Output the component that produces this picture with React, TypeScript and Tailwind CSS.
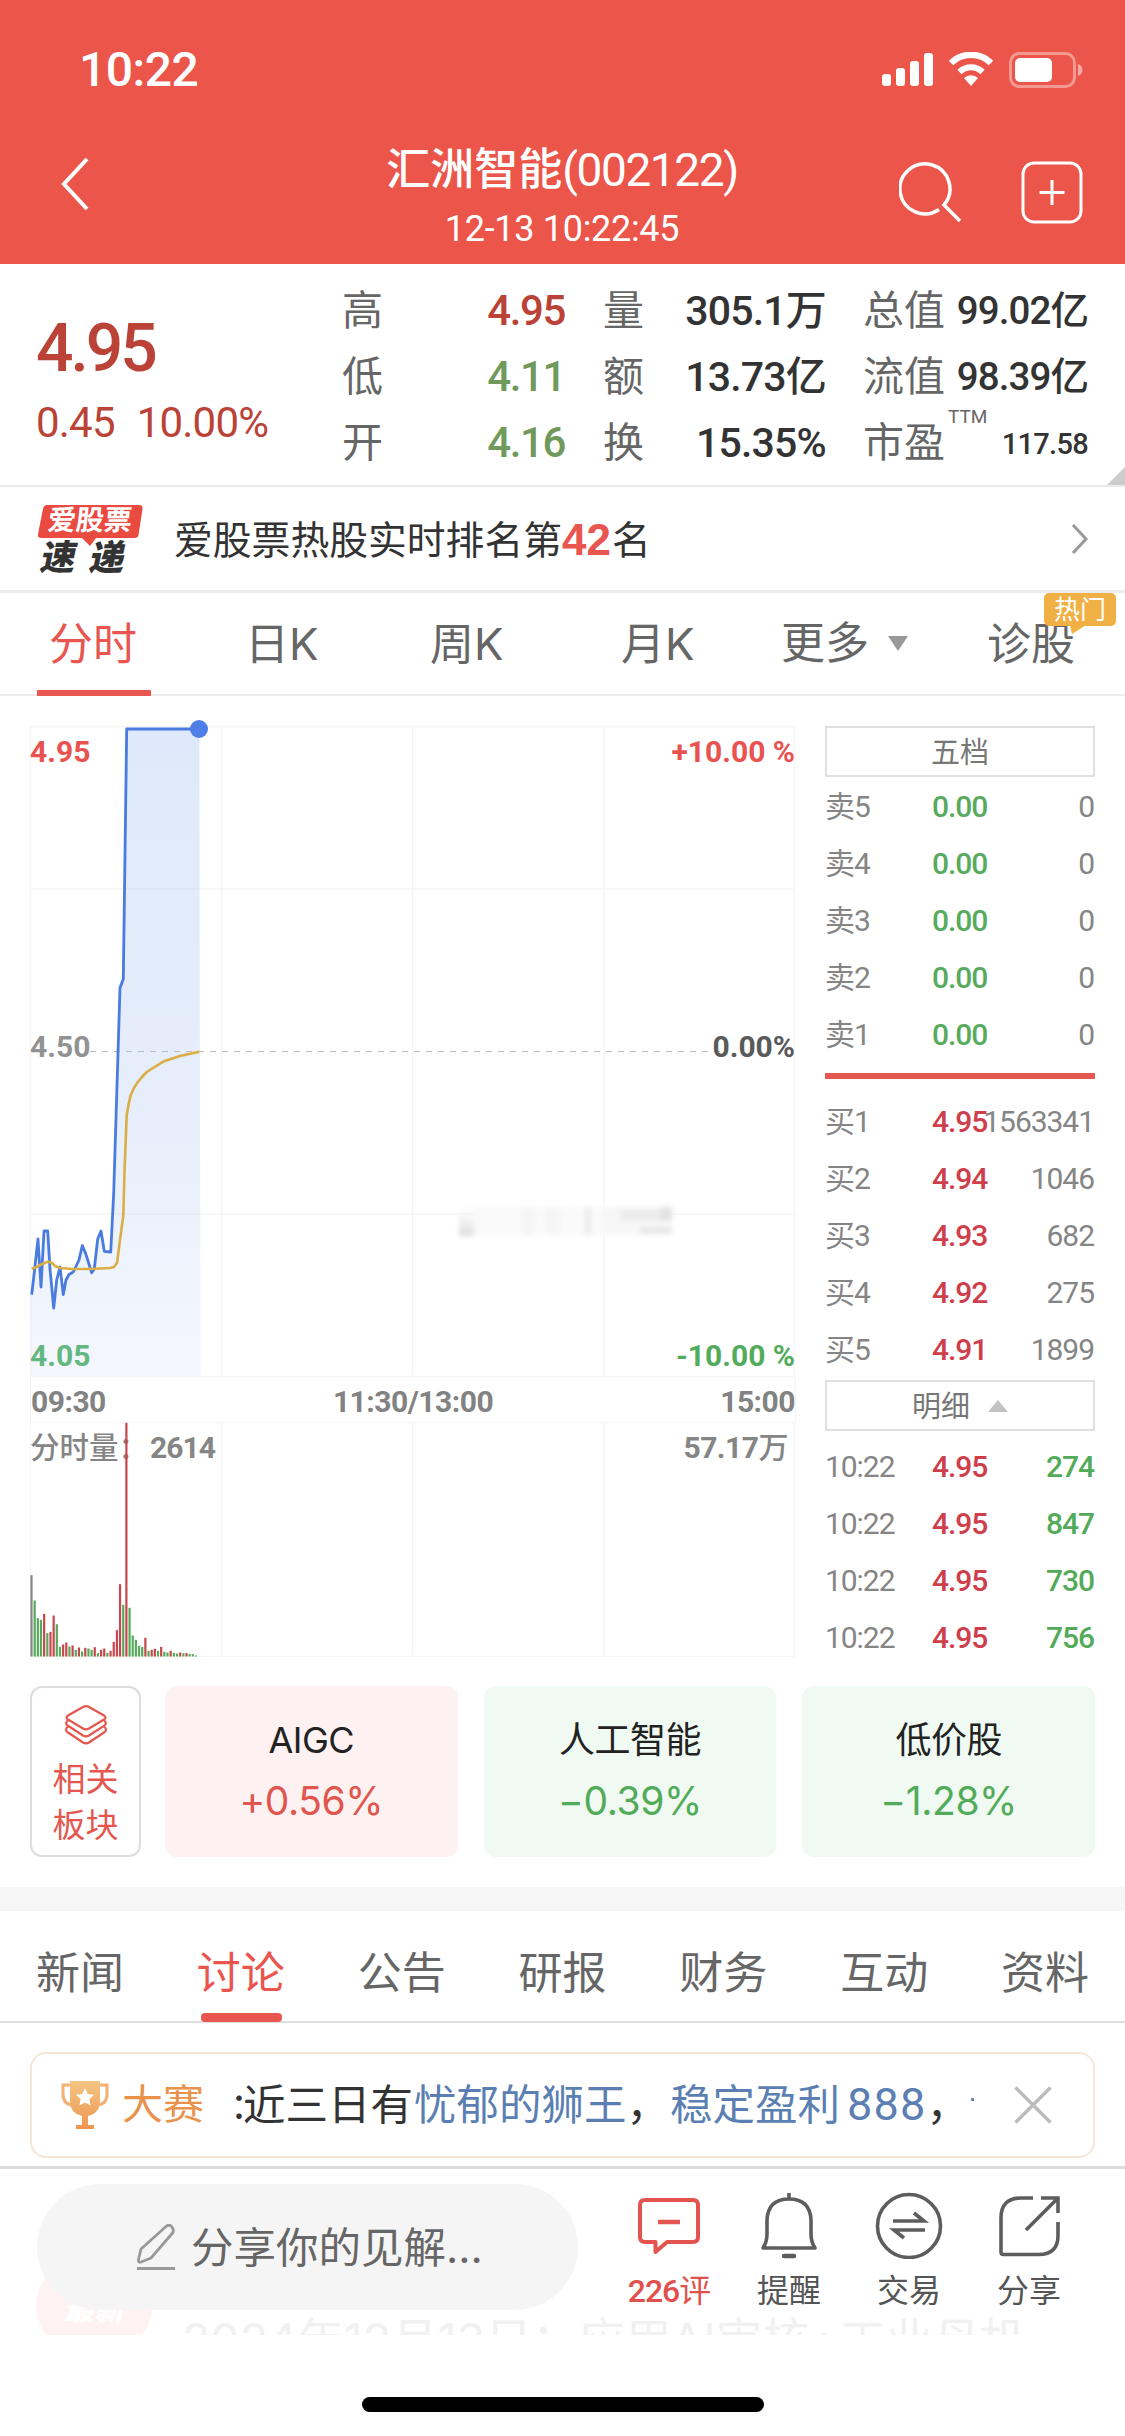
import React from 'react';

const NUM = "font-['Roboto','Noto_Sans_CJK_SC',sans-serif]";
const SANS = "font-['Inter','Noto_Sans_CJK_SC',sans-serif]";

function StatusBar() {
  return (
    <div className="flex h-[140px] items-center justify-between pl-[79px] pr-[42px]">
      <div className={`${NUM} text-[48px] font-medium leading-none tracking-[-0.5px]`}>10:22</div>
      <svg width="202" height="36" viewBox="0 0 202 36" fill="none">
        <rect x="1" y="22" width="9" height="12" rx="3" fill="#fff" />
        <rect x="15" y="16" width="9" height="18" rx="3" fill="#fff" />
        <rect x="29" y="9" width="9" height="25" rx="3" fill="#fff" />
        <rect x="43" y="1" width="9" height="33" rx="3" fill="#fff" />
        <path d="M90 34l-7-8a10 10 0 0 1 14 0z" fill="#fff" />
        <path d="M78.500 20a16.500 16.500 0 0 1 23 0" stroke="#fff" strokeWidth="6" />
        <path d="M70 11a28.500 28.500 0 0 1 40 0" stroke="#fff" strokeWidth="6.500" />
        <rect x="129.500" y="1.500" width="64" height="33" rx="9" stroke="#fff" strokeOpacity=".4" strokeWidth="3" />
        <rect x="134" y="6" width="37" height="24" rx="5" fill="#fff" />
        <path d="M197 12c3 1 4.500 3 4.500 6s-1.500 5-4.500 6z" fill="#fff" fillOpacity=".5" />
      </svg>
    </div>
  );
}

function NavBar() {
  return (
    <div className="flex h-[124px] items-start">
      <svg className="ml-[60px] mt-[17px]" width="30" height="55" viewBox="0 0 30 55" fill="none" stroke="#fff" strokeWidth="4">
        <path d="M27 2L4 27l23 25" />
      </svg>
      <div className="ml-[90px] flex w-[764px] flex-col items-center">
        <div className={`${NUM} flex h-[60px] items-center whitespace-nowrap text-[44px] font-medium leading-none`}>
          <span>汇洲智能</span>
          <span className="text-[46px] font-normal tracking-[-1.4px]">(002122)</span>
        </div>
        <div className={`${NUM} mt-[7px] text-[36px] leading-[44px] tracking-[-0.3px]`}>12-13 10:22:45</div>
      </div>
      <svg className="-ml-[45px] mt-[20px]" width="64" height="64" viewBox="0 0 64 64" fill="none" stroke="#fff" strokeWidth="3.500">
        <path d="M40 49.500A25 25 0 1 1 45 45L61 61" />
      </svg>
      <svg className="ml-[58px] mt-[21px]" width="62" height="64" viewBox="0 0 62 64" fill="none" stroke="#fff" strokeWidth="3">
        <rect x="2" y="2" width="58" height="59" rx="11" />
        <path d="M31 19v25M18.500 31.500h25" />
      </svg>
    </div>
  );
}

const stats = [
  [{ l: '高', v: '4.95', c: 'text-[#bb4236]' }, { l: '量', v: '305.1万' }, { l: '总值', v: '99.02亿' }],
  [{ l: '低', v: '4.11', c: 'text-[#6f9a5c]' }, { l: '额', v: '13.73亿' }, { l: '流值', v: '98.39亿' }],
  [{ l: '开', v: '4.16', c: 'text-[#6f9a5c]' }, { l: '换', v: '15.35%' }, { l: '市盈', v: '117.58' }],
];

function Quote() {
  return (
    <div className={`${NUM} relative flex h-[223px] border-b-2 border-[#eaeaea]`}>
      <div className="w-[342px] pl-[36px] text-[#bb4236]">
        <div className="mt-[52px] text-[66px] font-medium leading-[66px] tracking-[-3px]">4.95</div>
        <div className="mt-[20px] flex gap-[22px] whitespace-nowrap text-[42px] leading-[42px] tracking-[-0.8px]">
          <span>0.45</span>
          <span>10.00%</span>
        </div>
      </div>
      <div className="mt-[14px] flex flex-col text-[41px] leading-[66px]">
        {stats.map((r, i) => (
          <div key={i} className="flex h-[66px] whitespace-nowrap text-[#666]">
            <div className="flex w-[223px] justify-between">
              <span>{r[0].l}</span>
              <span className={`text-[42px] font-medium tracking-[-1.4px] ${r[0].c}`}>{r[0].v}</span>
            </div>
            <div className="ml-[38px] flex w-[223px] justify-between">
              <span>{r[1].l}</span>
              <span className="text-[41px] font-medium tracking-[-0.8px] text-[#333]">{r[1].v}</span>
            </div>
            <div className="ml-[37px] flex w-[225px] justify-between">
              <span className="relative">
                {r[2].l}
                {i === 2 && <sup className="absolute left-[85px] top-[-11px] text-[19px] leading-[36px]">TTM</sup>}
              </span>
              <span className={i === 2 ? 'pt-[1px] text-[29px] font-medium tracking-[-0.7px] text-[#333]' : 'text-[38.500px] font-medium tracking-[-0.9px] text-[#333]'}>{r[2].v}</span>
            </div>
          </div>
        ))}
      </div>
      <svg className="absolute bottom-0 right-0" width="18" height="18" viewBox="0 0 18 18">
        <path d="M18 0v18H0z" fill="#ccc" />
      </svg>
    </div>
  );
}

function HotRank() {
  return (
    <div className={`${SANS} flex h-[106px] items-center border-b-[3px] border-[#ebebeb] pl-[38px] pr-[36px]`}>
      <div className="flex h-[68px] w-[106px] flex-col">
        <div className="relative h-[33px]">
          <svg className="absolute left-0 top-0" width="106" height="42" viewBox="0 0 106 42">
            <path d="M9 0h92q4 0 3.500 4l-4 26q-.5 3-4 3H58l-6 8-8-8H3q-4 0-3-4L5 4q.6-4 4-4z" fill="#e94b41" />
          </svg>
          <div className="relative -skew-x-6 pl-[10px] text-[28px] font-bold leading-[31px] text-white">爱股票</div>
        </div>
        <div className="relative flex -skew-x-12 gap-[14px] pl-[4px] pt-[3px] text-[35px] font-black leading-[32px] text-[#333]">
          <span>速</span>
          <span>递</span>
        </div>
      </div>
      <div className="ml-[30px] mt-[3px] flex items-center whitespace-nowrap text-[38.800px] leading-[56px] text-[#333]">
        <span>爱股票热股实时排名第</span>
        <span className="font-['Liberation_Sans',sans-serif] text-[44px] font-bold text-[#e9554f]">42</span>
        <span className="ml-[1px]">名</span>
      </div>
      <svg className="ml-auto" width="18" height="32" viewBox="0 0 18 32" fill="none" stroke="#999" strokeWidth="3">
        <path d="M2 2l13 14L2 30" />
      </svg>
    </div>
  );
}

function ChartTabs() {
  return (
    <div className={`${SANS} flex h-[103px] border-b-2 border-[#ececec] text-[44px] leading-[103px] text-[#666]`}>
      <div className="ml-[37px] h-[103px] w-[114px] border-b-[6px] border-[#e9554f] pl-[12px] text-[#e9554f]">分时</div>
      <div className="ml-[94px] w-[185px]">日K</div>
      <div className="w-[191px]">周K</div>
      <div className="w-[160px]">月K</div>
      <div className="flex w-[206px] items-center">
        更多
        <svg className="ml-[19px]" width="20" height="15" viewBox="0 0 20 15">
          <path d="M0 0h20L10 15z" fill="#999" />
        </svg>
      </div>
      <div className="relative w-[138px]">
        诊股
        <div className="absolute left-[57px] top-0 h-[33px] w-[72px] rounded-[5px] bg-[#f1b043] text-center text-[26px] leading-[33px] text-white">
          热门
          <svg className="absolute left-[24px] top-[32px]" width="18" height="10" viewBox="0 0 18 10">
            <path d="M2 0h16L4 9z" fill="#f1b043" />
          </svg>
        </div>
      </div>
    </div>
  );
}

const pricePts =
  '1.700,568.600 4.700,543 8,513 11,561 14,505 17.700,505 20,543 23.700,582 26.700,554 30,541 33.300,568.600 36,554 39,548.500 43.300,546 49,534 52.300,519.500 55.700,527.600 61.700,546.800 64.300,543 67.700,513 71,505 74.300,525.300 80.700,526 83.700,467 90,262 93.300,253 96.700,3 169.300,3';
const avgPts =
  '1.700,543 6.700,541 12,538 18.300,535.600 22,537 25,540 30,542 43,543 60,543 80,542 84,541 87,537 90,514 93.300,489.600 94.600,443 96.700,389 98.500,379 100.700,369 104,362 107.300,356.600 112,351 116.700,346 133.300,335.600 150,330 169.300,325.800';

const vol: [string, number][] = [
  ['k', 244], ['g', 168], ['g', 115], ['g', 110], ['r', 128], ['g', 70], ['r', 74], ['r', 123], ['g', 97], ['g', 29],
  ['r', 36], ['r', 42], ['g', 30], ['r', 33], ['g', 20], ['r', 27], ['g', 15], ['r', 26], ['g', 24], ['g', 20],
  ['r', 28], ['g', 10], ['r', 20], ['r', 24], ['g', 11], ['r', 17], ['r', 44], ['r', 79], ['r', 217], ['g', 155],
  ['r', 701], ['g', 146], ['g', 63], ['g', 50], ['g', 32], ['g', 29], ['r', 56], ['g', 17], ['r', 20], ['r', 23],
  ['g', 17], ['r', 29], ['g', 14], ['g', 12], ['r', 17], ['g', 11], ['g', 9], ['r', 12], ['g', 10], ['r', 10],
  ['g', 8], ['g', 7], ['g', 3],
];
const volColor: Record<string, string> = { k: '#858585', g: '#57a95b', r: '#c6474d' };

function Chart() {
  return (
    <div className={`${NUM} w-[766px] text-[30px] font-bold leading-[30px]`}>
      <div className="relative h-[651px]">
        <svg className="overflow-visible" width="766" height="651" viewBox="0 0 766 651" fill="none">
          <defs>
            <linearGradient id="area" x1="0" y1="0" x2="0" y2="1">
              <stop offset="0" stopColor="#dee9fb" />
              <stop offset=".6" stopColor="#e7eefb" />
              <stop offset="1" stopColor="#f4f7fd" />
            </linearGradient>
            <linearGradient id="smudge" x1="0" y1="0" x2="0" y2="1">
              <stop offset="0" stopColor="#f6f6f6" stopOpacity="0" />
              <stop offset="1" stopColor="#dadada" />
            </linearGradient>
            <filter id="soft"><feGaussianBlur stdDeviation="2.500" /></filter>
          </defs>
          <polygon points={`${pricePts} 170.500,650 0.500,650 0.500,570`} fill="url(#area)" />
          <path d="M.5 .5h764v650H.5zM.5 163h764M.5 488h764M191.500 .5v650M382.500 .5v650M574 .5v650" stroke="#6b7280" strokeOpacity=".07" strokeWidth="1.500" />
          <path d="M60 325.500h630" stroke="#c4b9be" strokeWidth="1.200" strokeDasharray="6 6" />
          <g filter="url(#soft)">
            <rect x="429" y="477" width="15" height="33" fill="url(#smudge)" />
            <rect x="444" y="481" width="130" height="28" fill="#fafafa" />
            <rect x="492" y="481" width="12" height="28" fill="#f4f4f4" />
            <rect x="516" y="481" width="14" height="28" fill="#f5f5f5" />
            <rect x="554" y="481" width="8" height="28" fill="#eee" />
            <rect x="572" y="481" width="70" height="28" fill="#f7f7f7" />
            <rect x="590" y="483" width="52" height="12" fill="#ececec" />
            <rect x="610" y="501" width="32" height="7" fill="#e8e8e8" />
            <rect x="630" y="481" width="12" height="13" fill="#e2e2e2" />
          </g>
          <polyline points={pricePts} stroke="#4a7be0" strokeWidth="2.800" strokeLinejoin="round" />
          <polyline points={avgPts} stroke="#dbae45" strokeWidth="2.600" strokeLinejoin="round" />
          <circle cx="169" cy="3" r="9" fill="#4d7fe6" />
        </svg>
        <div className="absolute inset-x-0 top-[11px] flex justify-between text-[#e9524f]"><span>4.95</span><span className="pr-[1px]">+10.00 %</span></div>
        <div className="absolute inset-x-0 top-[306px] flex justify-between text-[#929292]"><span>4.50</span><span className="pr-[1px] text-[#5a5a5a]">0.00%</span></div>
        <div className="absolute inset-x-0 top-[615px] flex justify-between text-[#53ab5d]"><span className="text-[#63b780]">4.05</span><span className="pr-[1px]">-10.00 %</span></div>
      </div>
      <div className="grid h-[45px] grid-cols-3 items-center border-x border-[#f4f4f4] pt-[4px] text-[#828282] tracking-[-0.5px]">
        <span>09:30</span>
        <span className="text-center">11:30/13:00</span>
        <span className="text-right">15:00</span>
      </div>
      <div className="relative h-[235px]">
        <div className="absolute inset-x-0 top-[11px] flex justify-between pr-[8px] font-medium text-[#858585]">
          <span className="flex whitespace-pre"><span className="text-[29.500px]">分时量：</span><span className="ml-[2px] font-bold tracking-[-1px]">2614</span></span>
          <span className="font-bold tracking-[-0.5px]">57.17<span className="font-medium">万</span></span>
        </div>
        <svg className="relative" width="766" height="235" viewBox="0 0 766 235" fill="none">
          <path d="M.5 .5h764v234H.5zM191.500 .5v234M382.500 .5v234M574 .5v234" stroke="#6b7280" strokeOpacity=".07" strokeWidth="1.500" />
          {vol.map(([c, h], i) => (
            <rect key={i} x={0.4 + i * 3.163} y={234.5 - h / 3} width="2.200" height={h / 3} fill={volColor[c]} />
          ))}
        </svg>
      </div>
    </div>
  );
}

const sell = ['5', '4', '3', '2', '1'];
const buy = [['1', '4.95', '1563341'], ['2', '4.94', '1046'], ['3', '4.93', '682'], ['4', '4.92', '275'], ['5', '4.91', '1899']];
const ticks = ['274', '847', '730', '756'];

function Row({ a, b, c, bc, cc }: { a: string; b: string; c: string; bc: string; cc: string }) {
  return (
    <div className="flex h-[57px] items-center whitespace-nowrap pr-[1px]">
      <span className="w-[107px] text-[#858585]">{a}</span>
      <span className={`w-[54px] font-medium ${bc}`}>{b}</span>
      <span className="flex w-[108px] justify-end"><span className={cc}>{c}</span></span>
    </div>
  );
}

function OrderBook() {
  return (
    <div className={`${NUM} ml-[29px] w-[270px] text-[30px] leading-[40px] tracking-[-1.050px]`}>
      <div className="flex h-[51px] items-center justify-center border-2 border-[#e0e0e0] pt-[2px] text-[29px] tracking-normal text-[#777]">五档</div>
      <div className="mt-[1px]">
        {sell.map((n) => (
          <Row key={n} a={`卖${n}`} b="0.00" c="0" bc="text-[#57ab5d]" cc="text-[#858585]" />
        ))}
      </div>
      <div className="mb-[14px] mt-[10px] h-[6px] bg-[#e4574f]" />
      <div>
        {buy.map(([n, p, q]) => (
          <Row key={n} a={`买${n}`} b={p} c={q} bc="text-[#cf3e4b]" cc="text-[#858585]" />
        ))}
      </div>
      <div className="mt-[2px] flex h-[51px] items-center justify-center border-2 border-[#e0e0e0] pt-[2px] text-[29px] tracking-normal text-[#777]">
        明细
        <svg className="-mt-[2px] ml-[18px]" width="20" height="12" viewBox="0 0 20 12"><path d="M10 0l10 12H0z" fill="#c2c2c2" /></svg>
      </div>
      <div className="mt-[7px]">
        {ticks.map((q) => (
          <Row key={q} a="10:22" b="4.95" c={q} bc="text-[#cf3e4b]" cc="font-medium text-[#53ab5a]" />
        ))}
      </div>
    </div>
  );
}

const sectors = [
  { n: 'AIGC', v: '+0.56%', s: 'bg-[#fdf1f1] text-[#e0564f]' },
  { n: '人工智能', v: '−0.39%', s: 'bg-[#f0faf3] text-[#52ab58]' },
  { n: '低价股', v: '−1.28%', s: 'bg-[#f0faf3] text-[#52ab58]' },
];

function Sectors() {
  return (
    <div className={`${SANS} flex h-[171px] pl-[30px] pr-[30px]`}>
      <div className="mr-[24px] flex w-[111px] flex-col items-center rounded-[12px] border-2 border-[#ddd] text-[33px] leading-[46px] text-[#e4574f]">
        <svg className="mb-[10px] mt-[16px]" width="44" height="42" viewBox="0 0 44 42" fill="none" stroke="#e4574f" strokeWidth="2.200" strokeLinejoin="round">
          <path d="M19 3q3-1.800 6 0l15 8.500q3 2 0 4L25 24.500q-3 1.800-6 0L4 15.500q-3-2 0-4z" />
          <path d="M4.500 15.800q-4.500 3.500-.5 6L19 31.500q3 1.800 6 0l15-9.700q4-2.500-.5-6" />
          <path d="M4 22.500q-4 3.500 0 6L19 38.500q3 1.800 6 0l15-10q4-2.500 0-6" />
        </svg>
        <span>相关</span>
        <span>板块</span>
      </div>
      <div className="grid flex-1 grid-cols-3 gap-[26px]">
        {sectors.map((s) => (
          <div key={s.n} className={`flex flex-col items-center rounded-[12px] pt-[29px] ${s.s}`}>
            <div className="text-[36px] leading-[50px] tracking-[-0.5px] text-[#222]">{s.n}</div>
            <div className="mt-[11px] text-[39px] leading-[50px] tracking-[-0.4px]">{s.v}</div>
          </div>
        ))}
      </div>
    </div>
  );
}

const newsTabs = ['新闻', '讨论', '公告', '研报', '财务', '互动', '资料'];

function NewsTabs() {
  return (
    <div className={`${SANS} flex h-[112px] justify-between border-b-2 border-[#dde0e0] px-[36px] text-[44px] leading-[125px] text-[#666]`}>
      {newsTabs.map((t, i) => (
        <div key={t} className={i === 1 ? 'relative text-[#e9554f]' : ''}>
          {t}
          {i === 1 && <div className="absolute left-[4px] top-[102px] h-[9px] w-[81px] rounded-[4px] bg-[#e9554f]" />}
        </div>
      ))}
    </div>
  );
}

function Contest() {
  return (
    <div className={`${SANS} mx-[30px] mt-[29px] flex h-[106px] items-center rounded-[16px] border-2 border-[#f6e6d8] pl-[28px]`}>
      <svg width="50" height="50" viewBox="0 0 50 50" fill="none">
        <defs>
          <linearGradient id="cup" x1="0" y1="0" x2="0" y2="1"><stop offset="0" stopColor="#f4c583" /><stop offset="1" stopColor="#ee9450" /></linearGradient>
        </defs>
        <path d="M11 5H3v9q0 11 11 11M39 5h8v9q0 11-11 11" stroke="#f2b172" strokeWidth="3" />
        <path d="M10 1h30v20q0 12-12 15v9h6v4H16v-4h6v-9Q10 33 10 21z" fill="url(#cup)" />
        <path d="M25 8l2.800 6 6.200.8-4.600 4.400 1.200 6.400-5.600-3.200-5.600 3.200 1.200-6.400L16 14.800l6.200-.8z" fill="#fff" />
      </svg>
      <span className="ml-[12px] text-[41px] text-[#e8924d]">大赛</span>
      <div className="ml-[32px] flex w-[738px] items-center overflow-hidden whitespace-nowrap text-[42.500px] leading-[60px] text-[#333]">
        <span className="w-[7px] shrink-0 overflow-hidden"><span className="-ml-[6px] text-[36px]">：</span></span>
        <span>近三日有</span>
        <span className="ml-[1px] text-[#5b7fb2]">忧郁的狮王</span>
        <span>，</span>
        <span className="ml-[1px] text-[#5b7fb2]">稳定盈利</span>
        <span className="ml-[7px] font-['Roboto'] text-[45px] tracking-[1.200px] text-[#5b7fb2]">888</span>
        <span>，</span>
        <span className="text-[#5b7fb2]">订</span>
      </div>
      <svg className="ml-[40px]" width="38" height="38" viewBox="0 0 38 38" stroke="#bcbcbc" strokeWidth="3.500"><path d="M1.500 1.500l35 35M36.500 1.500l-35 35" /></svg>
    </div>
  );
}

function BottomBar() {
  return (
    <div className={`${SANS} mt-[8px] border-t-[3px] border-[#dcdcdc]`}>
      <div className="relative h-[166px] overflow-hidden">
        <div className="absolute left-[36px] top-[92px] h-[90px] w-[116px] rounded-[44px] bg-[#fef2f2]">
          <div className="pt-[24px] text-center text-[30px] font-black italic leading-[48px] text-white">最新</div>
        </div>
        <div className="absolute left-[182px] top-[141px] whitespace-nowrap text-[46.500px] leading-[60px] text-[#f1f1f1]">2024年12月13日：应用AI审核+工业母机</div>
        <div className="relative flex pl-[37px] pt-[15px]">
          <div className="flex h-[126px] w-[541px] items-center rounded-full bg-[#f5f5f5] pl-[99px]">
            <svg width="40" height="46" viewBox="0 0 40 46" fill="none" stroke="#999" strokeWidth="2.800" strokeLinejoin="round">
              <path d="M30 2.500q3-2.500 5.500 0t1.500 6L15 34l-10 4q-3 1-2.500-2.500L5 25z" />
              <path d="M1 44.500h38" />
            </svg>
            <span className="ml-[15px] mt-[1px] flex whitespace-nowrap text-[42.500px] text-[#666]">分享你的见解<span>...</span></span>
          </div>
          <div className="flex text-[32px] leading-[40px] text-[#555]">
            <div className="ml-[45px] flex w-[92px] flex-col items-center text-[#e0504c]">
              <svg className="mt-[7px]" width="64" height="68" viewBox="0 0 64 68" fill="none" stroke="#e4544f" strokeWidth="4" strokeLinejoin="round">
                <path d="M8 9h48q5 0 5 5v32q0 5-5 5H30L18.500 61V51H8q-5 0-5-5V14q0-5 5-5z" />
                <path d="M21 31h22" strokeWidth="4.500" />
              </svg>
              <span className={`${NUM} mt-[12px] whitespace-nowrap font-medium tracking-[-1px]`}>226<span className="font-normal">评</span></span>
            </div>
            <div className="ml-[24px] flex w-[100px] flex-col items-center">
              <svg className="mt-[7px]" width="60" height="68" viewBox="0 0 60 68" fill="none" stroke="#5d5d5d" strokeWidth="3.600">
                <path d="M30 2v7M4 57q4-6 4-14V29Q9 8 30 8t22 21v14q0 8 4 14z" strokeLinejoin="round" />
                <path d="M25 65h10" strokeWidth="4.500" strokeLinecap="round" />
              </svg>
              <span className="mt-[12px]">提醒</span>
            </div>
            <div className="ml-[20px] flex w-[100px] flex-col items-center">
              <svg className="mt-[7px]" width="68" height="68" viewBox="0 0 68 68" fill="none" stroke="#5d5d5d" strokeWidth="3.600">
                <circle cx="34" cy="35" r="31.500" />
                <path d="M18 30h31L39 22M50 39H19l10 8" />
              </svg>
              <span className="mt-[12px]">交易</span>
            </div>
            <div className="ml-[20px] flex w-[100px] flex-col items-center">
              <svg className="mt-[7px]" width="64" height="68" viewBox="0 0 64 68" fill="none" stroke="#5d5d5d" strokeWidth="3.600">
                <path d="M36 7H24Q4 7 4 27v34q0 2.500 2.500 2.500H42q19 0 19-19V31" />
                <path d="M44 7h17v15M61 7L29 39" />
              </svg>
              <span className="mt-[12px]">分享</span>
            </div>
          </div>
        </div>
      </div>
      <div className="mx-auto mt-[62px] h-[15px] w-[402px] rounded-full bg-black" />
    </div>
  );
}

export default function App() {
  return (
    <div className="h-[2436px] w-[1125px] overflow-hidden bg-white">
      <header className="h-[264px] bg-[#ec554a] text-white">
        <StatusBar />
        <NavBar />
      </header>
      <Quote />
      <HotRank />
      <ChartTabs />
      <main className="flex h-[990px] pl-[30px] pt-[30px]">
        <Chart />
        <OrderBook />
      </main>
      <Sectors />
      <div className="mt-[30px] h-[24px] bg-[#f6f6f6]" />
      <NewsTabs />
      <Contest />
      <BottomBar />
    </div>
  );
}
